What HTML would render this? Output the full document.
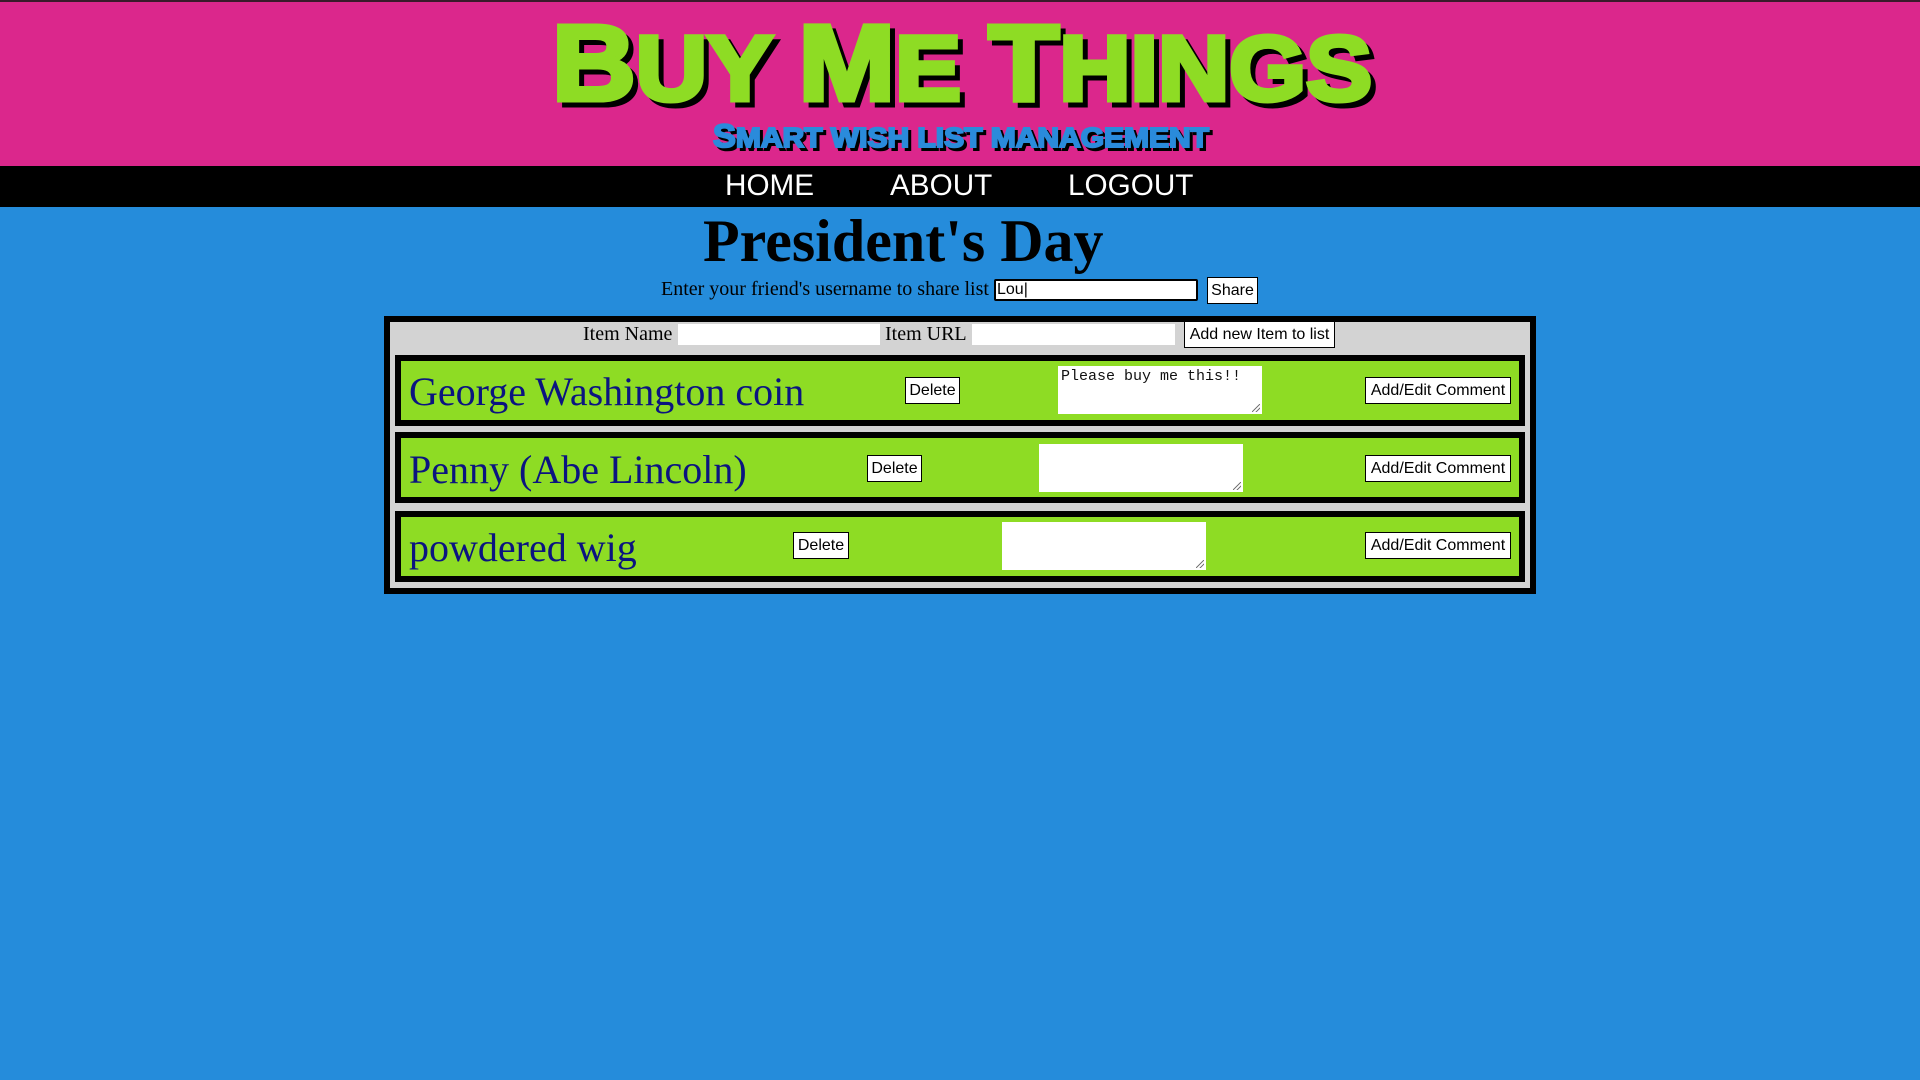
<!DOCTYPE html>
<html><head><meta charset="utf-8"><style>
*{margin:0;padding:0;box-sizing:border-box}
body{width:1920px;height:1080px;background:#258cdb;position:relative;overflow:hidden;font-family:"Liberation Serif",serif}
.hdr{position:absolute;left:0;top:0;width:1920px;height:166px;background:#db278c;border-top:2px solid #3a1a2a}
.nav{position:absolute;left:0;top:166px;width:1920px;height:41px;background:#000}
.nav span{position:absolute;top:3px;color:#fff;font:30px "Liberation Sans",sans-serif;transform:scaleX(.99);transform-origin:left}
.abs{position:absolute}
.btn{position:absolute;background:#fff;border:1px solid #000;font:16px "Liberation Sans",sans-serif;color:#000;text-align:center;line-height:25px;height:27px}
.inp{position:absolute;background:#fff}
.box{position:absolute;left:384px;top:316px;width:1152px;height:278px;background:#000;padding:6px}
.inner{position:relative;width:100%;height:100%;background:#d3d3d3}
.row{position:absolute;left:395px;width:1130px;height:71px;background:#000;padding:6px}
.row .g{width:100%;height:100%;background:#8edc24}
.it{position:absolute;left:409px;color:#0b1480;font-size:40px;white-space:nowrap}
.ta{position:absolute;background:#fff;width:204px;height:48px;font:15px "Liberation Mono",monospace;padding:2px 3px;color:#111}
.ta:after{content:"";position:absolute;right:2px;bottom:2px;width:8px;height:8px;background:linear-gradient(135deg,transparent 45%,#777 46%,#777 54%,transparent 55%,transparent 70%,#777 71%,#777 79%,transparent 80%)}
</style></head><body>
<div class="hdr"></div>
<svg class="abs" style="left:0;top:0" width="1920" height="166">
<g font-family="Liberation Sans, DejaVu Sans, sans-serif" font-weight="bold">
<text x="552" y="100" textLength="820" lengthAdjust="spacingAndGlyphs" fill="#000" stroke="#000" stroke-width="5" transform="translate(5,5)"><tspan font-size="108">B</tspan><tspan font-size="92">UY </tspan><tspan font-size="108">M</tspan><tspan font-size="92">E </tspan><tspan font-size="108">T</tspan><tspan font-size="92">HINGS</tspan></text>
<text x="552" y="100" textLength="820" lengthAdjust="spacingAndGlyphs" fill="#8edc24" stroke="#8edc24" stroke-width="5"><tspan font-size="108">B</tspan><tspan font-size="92">UY </tspan><tspan font-size="108">M</tspan><tspan font-size="92">E </tspan><tspan font-size="108">T</tspan><tspan font-size="92">HINGS</tspan></text>
<text x="713" y="147" textLength="496" lengthAdjust="spacingAndGlyphs" fill="#000" stroke="#000" stroke-width="2" transform="translate(3,3)"><tspan font-size="32">S</tspan><tspan font-size="28">MART WISH LIST MANAGEMENT</tspan></text>
<text x="713" y="147" textLength="496" lengthAdjust="spacingAndGlyphs" fill="#2a8bdb" stroke="#2a8bdb" stroke-width="2"><tspan font-size="32">S</tspan><tspan font-size="28">MART WISH LIST MANAGEMENT</tspan></text>
</g></svg>
<div class="nav"><span style="left:725px">HOME</span><span style="left:890px">ABOUT</span><span style="left:1068px">LOGOUT</span></div>
<div class="abs" style="left:703px;top:207px;font-size:60px;font-weight:bold;white-space:nowrap">President's Day</div>
<div class="abs" style="left:661px;top:278px;font-size:20px;white-space:nowrap">Enter your friend's username to share list</div>
<div class="inp" style="left:994px;top:279px;width:204px;height:22px;border:2px solid #000;border-radius:2px;font:16px 'Liberation Sans',sans-serif;line-height:18px;padding-left:1px">Lou|</div>
<div class="btn" style="left:1207px;top:277px;width:51px">Share</div>
<div class="box"><div class="inner"></div></div>
<div class="abs" style="left:583px;top:323px;font-size:20px">Item Name</div>
<div class="inp" style="left:678px;top:324px;width:202px;height:21px"></div>
<div class="abs" style="left:885px;top:323px;font-size:20px">Item URL</div>
<div class="inp" style="left:972px;top:324px;width:203px;height:21px"></div>
<div class="btn" style="left:1184px;top:321px;width:151px">Add new Item to list</div>

<div class="row" style="top:355px"><div class="g"></div></div>
<div class="it" style="top:368px">George Washington coin</div>
<div class="btn" style="left:905px;top:377px;width:55px">Delete</div>
<div class="ta" style="left:1058px;top:366px">Please buy me this!!</div>
<div class="btn" style="left:1365px;top:377px;width:146px">Add/Edit Comment</div>

<div class="row" style="top:432px"><div class="g"></div></div>
<div class="it" style="top:446px">Penny (Abe Lincoln)</div>
<div class="btn" style="left:867px;top:455px;width:55px">Delete</div>
<div class="ta" style="left:1039px;top:444px"></div>
<div class="btn" style="left:1365px;top:455px;width:146px">Add/Edit Comment</div>

<div class="row" style="top:511px"><div class="g"></div></div>
<div class="it" style="top:524px">powdered wig</div>
<div class="btn" style="left:793px;top:532px;width:56px">Delete</div>
<div class="ta" style="left:1002px;top:522px"></div>
<div class="btn" style="left:1365px;top:532px;width:146px">Add/Edit Comment</div>
</body></html>
